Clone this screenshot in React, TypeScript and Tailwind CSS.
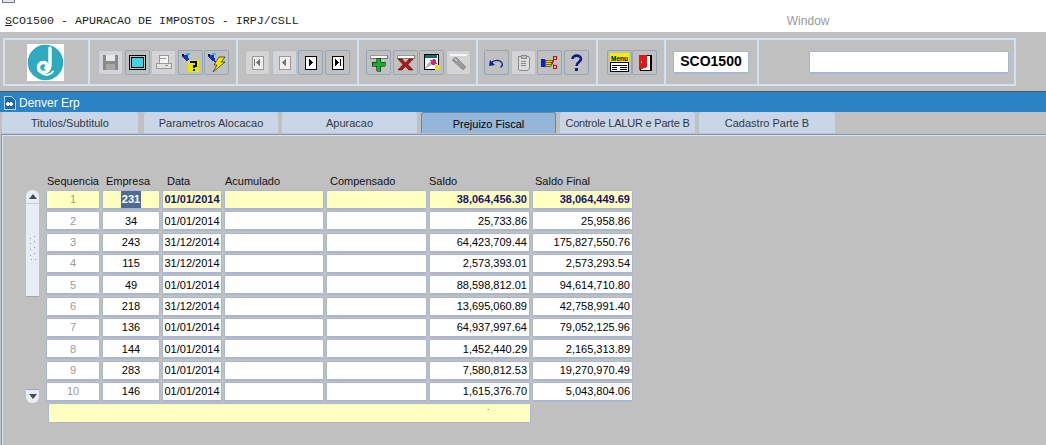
import type { ReactNode } from "react";

const rows = [
  { seq: "1", emp: "231", data: "01/01/2014", saldo: "38,064,456.30", final: "38,064,449.69" },
  { seq: "2", emp: "34", data: "01/01/2014", saldo: "25,733.86", final: "25,958.86" },
  { seq: "3", emp: "243", data: "31/12/2014", saldo: "64,423,709.44", final: "175,827,550.76" },
  { seq: "4", emp: "115", data: "31/12/2014", saldo: "2,573,393.01", final: "2,573,293.54" },
  { seq: "5", emp: "49", data: "01/01/2014", saldo: "88,598,812.01", final: "94,614,710.80" },
  { seq: "6", emp: "218", data: "31/12/2014", saldo: "13,695,060.89", final: "42,758,991.40" },
  { seq: "7", emp: "136", data: "01/01/2014", saldo: "64,937,997.64", final: "79,052,125.96" },
  { seq: "8", emp: "144", data: "01/01/2014", saldo: "1,452,440.29", final: "2,165,313.89" },
  { seq: "9", emp: "283", data: "01/01/2014", saldo: "7,580,812.53", final: "19,270,970.49" },
  { seq: "10", emp: "146", data: "01/01/2014", saldo: "1,615,376.70", final: "5,043,804.06" },
];

const tabs = [
  { label: "Titulos/Subtitulo", cls: "w-[136px] mr-[2px]" },
  { label: "Parametros Alocacao", cls: "w-[134px]" },
  { label: "Apuracao", cls: "w-[135px]" },
  { label: "Prejuizo Fiscal", cls: "w-[135px]" },
  { label: "Controle LALUR e Parte B", cls: "w-[135px] tracking-[-0.2px]" },
  { label: "Cadastro Parte B", cls: "w-[136px]" },
];

function Btn({ disabled, children }: { disabled?: boolean; children: ReactNode }) {
  return (
    <div className={`w-[25px] h-[25px] shrink-0 rounded-[2px] border flex items-center justify-center ${disabled ? "bg-[#d4d4d4] border-[#b4bcc6]" : "bg-[#c0c0c0] border-[#93a5b8]"}`}>
      <svg width="19" height="19" viewBox="0 0 19 19" shapeRendering="crispEdges">{children}</svg>
    </div>
  );
}

function Cell({ w, active, className, children }: { w: string; active?: boolean; className?: string; children?: ReactNode }) {
  return (
    <div className={`${w} h-[20px] shrink-0 rounded-[2px] border border-[#a9b8d0] border-b-2 flex items-center px-[2px] ${active ? "bg-[#ffffc0]" : "bg-white"} ${className ?? ""}`}>
      {children}
    </div>
  );
}

function Section({ w, className, children }: { w: string; className?: string; children?: ReactNode }) {
  return <div className={`${w} h-full shrink-0 border-r-2 border-[#d3e0f0] flex items-center ${className ?? ""}`}>{children}</div>;
}

// little blue wand shared by the two query buttons
function Wand() {
  return (
    <>
      <path d="M1 2 L8 1 L7 4 L9 9 L5 8 L1 4 Z" fill="#1030d0" />
      <rect x="5" y="0" width="4" height="2" fill="#20c0e0" />
      <rect x="1" y="1" width="2" height="2" fill="#000" />
    </>
  );
}

export default function App() {
  return (
    <div className="w-[1046px] h-[445px] overflow-hidden bg-[#c0c0c0] flex flex-col text-[11px] text-black font-['Liberation_Sans',Arial,sans-serif]">
      {/* window title and form title */}
      <div className="h-[32px] shrink-0 bg-white overflow-hidden">
        <div className="h-[3px] overflow-hidden flex items-end pl-[2px] gap-[4px]">
          <div className="w-[13px] h-[3px] shrink-0 border-b border-x border-[#6b7a8c] bg-[#dfe6ee]" />
          <span className="text-[12px] leading-[14px] whitespace-nowrap">DENVER ISERIES SINTESIS</span>
        </div>
        <div className="flex mt-[11px] pl-[5px] h-[14px] items-center">
          <span className="text-[11.67px] leading-[14px] text-[#222] whitespace-pre font-['Liberation_Mono','Courier_New',monospace]">
            <span className="underline">S</span>CO1500 - APURACAO DE IMPOSTOS - IRPJ/CSLL
          </span>
          <span className="ml-[488px] text-[12px] text-[#9a9a9a]">Window</span>
        </div>
      </div>

      {/* toolbar */}
      <div className="h-[59px] shrink-0 pt-[6px] pl-[3px]">
        <div className="w-[1013px] h-[48px] border-2 border-[#d3e0f0] flex">
          <Section w="w-[85px]" className="pl-[22px]">
            <div className="w-[37px] h-[37px] bg-white flex items-center justify-center">
              <svg width="37" height="37" viewBox="0 0 37 37">
                <circle cx="18.5" cy="18.5" r="17.8" fill="#2fa9bd" />
                <path d="M23 4 V21 C23 27 18 29.5 14.5 28 C10 26 10.5 19 16 18.5 C20 18 21 22 18.5 24" fill="none" stroke="#fff" strokeWidth="3.4" strokeLinecap="round" />
                <path d="M15 29.5 C19 32 24 30.5 26 27.5" fill="none" stroke="#fff" strokeWidth="1.8" strokeLinecap="round" />
              </svg>
            </div>
          </Section>
          <Section w="w-[148px]" className="gap-[1.6px] pl-[8px]">
            <Btn disabled>
              <rect x="2" y="2" width="15" height="15" fill="#8a8a8a" />
              <rect x="5" y="2" width="9" height="6" fill="#e8e8e8" />
              <rect x="5" y="11" width="9" height="6" fill="#a8a8a8" />
            </Btn>
            <Btn>
              <rect x="1" y="2" width="17" height="15" fill="#000" />
              <rect x="2" y="3" width="15" height="13" fill="#c0c0c0" />
              <rect x="3" y="4" width="13" height="11" fill="#000" />
              <rect x="4" y="5" width="11" height="9" fill="#3fd4e0" />
            </Btn>
            <Btn disabled>
              <rect x="5" y="2" width="9" height="8" fill="#f4f4f4" stroke="#999" />
              <rect x="2" y="10" width="15" height="5" fill="#e4e4e4" stroke="#999" />
              <rect x="11" y="12" width="3" height="1" fill="#888" />
              <rect x="6" y="5" width="6" height="1" fill="#999" />
            </Btn>
            <Btn>
              <Wand />
              <rect x="7" y="7" width="11" height="12" fill="#e8e800" />
              <path d="M10 10 V8.5 H15 V13 H12.5 V15" fill="none" stroke="#000" strokeWidth="2" />
              <rect x="11.5" y="16" width="2" height="2" fill="#000" />
            </Btn>
            <Btn>
              <Wand />
              <path d="M12 4 L18 4 L14 9 L18 9 L6 19 L10 12 L7 12 Z" fill="#f4e800" stroke="#222" strokeWidth="0.7" shapeRendering="auto" />
            </Btn>
          </Section>
          <Section w="w-[121px]" className="gap-[1.6px] pl-[7px]">
            <Btn disabled>
              <rect x="4" y="3" width="11" height="13" fill="#efefef" stroke="#999" />
              <rect x="6" y="6" width="1" height="7" fill="#777" />
              <path d="M12 6 V13 L8 9.5 Z" fill="#777" />
            </Btn>
            <Btn disabled>
              <rect x="4" y="3" width="11" height="13" fill="#efefef" stroke="#999" />
              <path d="M11 6 V13 L7 9.5 Z" fill="#777" />
            </Btn>
            <Btn>
              <rect x="4" y="3" width="11" height="13" fill="#fff" stroke="#000" />
              <path d="M8 6 V13 L12 9.5 Z" fill="#000" />
            </Btn>
            <Btn>
              <rect x="4" y="3" width="11" height="13" fill="#fff" stroke="#000" />
              <path d="M7 6 V13 L11 9.5 Z" fill="#000" />
              <rect x="12" y="6" width="1" height="7" fill="#000" />
            </Btn>
          </Section>
          <Section w="w-[119px]" className="gap-[1.6px] pl-[7px]">
            <Btn>
              <rect x="1" y="2" width="17" height="3" fill="#fff" stroke="#333" strokeWidth="0.5" />
              <path d="M7.5 5 H11.5 V9 H16 V13 H11.5 V18 H7.5 V13 H3 V9 H7.5 Z" fill="#10b030" stroke="#000" strokeWidth="0.5" />
            </Btn>
            <Btn>
              <rect x="1" y="2" width="17" height="3" fill="#fff" stroke="#333" strokeWidth="0.5" />
              <path d="M2 6 L6 6 L9.5 10 L13 6 L17 6 L12 11.5 L17 17 L13 17 L9.5 13.5 L6 17 L2 17 L7 11.5 Z" fill="#b01818" stroke="#400" strokeWidth="0.5" shapeRendering="auto" />
            </Btn>
            <Btn>
              <rect x="2" y="1" width="14" height="15" fill="#fff" stroke="#000" />
              <rect x="3" y="2" width="12" height="3" fill="#107070" />
              <path d="M3 15 L8 8 L10 12 L4 15 Z" fill="#b8b8b8" />
              <path d="M8 7 L13 6 L15 11 L10 12 Z" fill="#d02080" />
              <rect x="13" y="12" width="5" height="5" fill="#e8e000" />
            </Btn>
            <Btn disabled>
              <rect x="1" y="1" width="17" height="2" fill="#f4f4f4" />
              <path d="M3 7 L7 4 L17 14 L14 17 Z" fill="#9a9a9a" stroke="#777" strokeWidth="0.5" shapeRendering="auto" />
              <path d="M6 6 L8 8" stroke="#eee" />
            </Btn>
          </Section>
          <Section w="w-[120px]" className="gap-[1.6px] pl-[6px]">
            <Btn>
              <path d="M2 13 L3 7 L8 12 Z" fill="#0a2090" shapeRendering="auto" />
              <path d="M4 10 C7 6.5 13 6.5 15 10 C16 12 15 13.5 13.5 14.5" fill="none" stroke="#0a2090" strokeWidth="1.2" shapeRendering="auto" />
            </Btn>
            <Btn disabled>
              <rect x="4" y="3" width="11" height="14" rx="1" fill="#dcdcdc" stroke="#888" />
              <rect x="7" y="2" width="5" height="3" fill="#c0c0c0" stroke="#888" />
              <path d="M7 8 H12 M7 10 H12 M7 12 H12" stroke="#888" />
            </Btn>
            <Btn>
              <rect x="1" y="6" width="4" height="8" fill="#1020c0" />
              <path d="M5 7 H13 V9 H11 V13 H5 Z" fill="#f0d010" stroke="#000" strokeWidth="0.5" />
              <path d="M6 9 H11 M6 11 H11" stroke="#000" strokeWidth="0.5" />
              <circle cx="15" cy="5" r="2" fill="none" stroke="#c01010" />
              <circle cx="15" cy="14" r="2" fill="none" stroke="#c01010" />
              <path d="M14 7 L12 10 L14 12" fill="none" stroke="#c01010" />
            </Btn>
            <Btn>
              <path d="M5.5 6 C5.5 1.5 14 1.5 14 6 C14 9 9.5 9 9.5 13" fill="none" stroke="#0a1a90" strokeWidth="2.6" shapeRendering="auto" />
              <rect x="8" y="15" width="3" height="3" fill="#0a1a90" />
            </Btn>
          </Section>
          <Section w="w-[68px]" className="pl-[9px]">
            <Btn>
              <rect x="0" y="0" width="19" height="9" fill="#f0f000" />
              <text x="1" y="8" fontSize="6.5" fontWeight="700" fill="#000" textLength="17" lengthAdjust="spacingAndGlyphs">Menu</text>
              <rect x="0.5" y="9.5" width="18" height="9" fill="#fff" stroke="#000" />
              <path d="M2 12 H17 M2 14 H7 M10 14 H17 M2 16 H7 M10 16 H17" stroke="#000" />
            </Btn>
            <Btn>
              <rect x="5" y="2" width="11" height="15" fill="#fff" stroke="#000" />
              <rect x="15" y="2" width="2" height="15" fill="#000" />
              <path d="M4 2 L12 2 L12 14 L4 17 Z" fill="#e01818" />
              <rect x="6" y="8" width="1" height="2" fill="#f0e000" />
            </Btn>
          </Section>
          <Section w="w-[93px]" className="pl-[7px]">
            <div className="w-[76px] h-[23px] rounded-[2px] border border-[#a9b8d0] border-b-2 bg-white flex items-center justify-center text-[14px] font-bold">SCO1500</div>
          </Section>
          <div className="flex-1 flex items-center pl-[50px]">
            <div className="w-[200px] h-[23px] rounded-[2px] border border-[#a9b8d0] border-b-2 bg-white" />
          </div>
        </div>
      </div>

      {/* window caption */}
      <div className="h-[21px] shrink-0 bg-[#2b82c4] border-t border-[#44586c] flex items-center pl-[3px] gap-[3px] text-[12px] text-white">
        <svg width="13" height="15" viewBox="0 0 13 15" shapeRendering="crispEdges">
          <path d="M1 1 H8 L12 5 V14 H1 Z" fill="#1f6aa8" stroke="#b8d4ec" />
          <path d="M3 9 H10 M5 7 V11 M8 7 V11" stroke="#fff" strokeWidth="1.5" />
        </svg>
        <span className="pt-[1px]">Denver Erp</span>
      </div>

      {/* tabs */}
      <div className="h-[22px] shrink-0 flex gap-[4px] pl-[2px]">
        {tabs.map((t) => (
          <div key={t.label} className={`${t.cls} h-[21px] pt-[2px] rounded-t-[3px] flex items-center justify-center whitespace-nowrap ${t.label === "Prejuizo Fiscal" ? "bg-[#94b6d8] text-black border-t border-x border-[#6f86a0]" : "bg-[#c8d6e8] text-[#33363c]"}`}>
            {t.label}
          </div>
        ))}
      </div>

      {/* tab page */}
      <div className="flex-1 ml-[1px] border-t border-l border-[#7f95b0]">
        <div className="h-full border-t border-l border-[#d8e4f0] pt-[39px] pl-[23px]">
          <div className="flex gap-[7px]">
            <div className="w-[13px] shrink-0 pt-[15px] pb-[20px] flex flex-col justify-between">
              <div className="h-[107px] bg-[#e8edf5] rounded-t-[6px] border-b border-[#9aa8b8] flex flex-col items-center">
                <div className="h-[14px] w-full flex items-center justify-center border-b border-[#c4ccd8]">
                  <div className="w-0 h-0 border-x-[4px] border-x-transparent border-b-[5px] border-b-[#444c5c]" />
                </div>
                <svg className="mt-[31px]" width="9" height="26" viewBox="0 0 9 26" shapeRendering="crispEdges">
                  <path d="M6 1 h1 M2 3 h1 M2 8 h1 M6 6 h1 M6 12 h1 M2 14 h1 M2 20 h1 M6 18 h1 M7 24 h1 M3 24 h1" stroke="#8a96a8" />
                </svg>
              </div>
              <div className="h-[14px] bg-[#e8edf5] rounded-b-[6px] border-t border-[#9aa8b8] flex items-center justify-center">
                <div className="w-0 h-0 border-x-[4px] border-x-transparent border-t-[5px] border-t-[#444c5c]" />
              </div>
            </div>

            <div className="flex flex-col">
              <div className="flex h-[15px] pb-[2px] items-center leading-[13px] text-[#111]">
                <span className="w-[60px] pl-[1px]">Sequencia</span>
                <span className="w-[61px]">Empresa</span>
                <span className="w-[58px]">Data</span>
                <span className="w-[105px]">Acumulado</span>
                <span className="w-[99px]">Compensado</span>
                <span className="w-[106px]">Saldo</span>
                <span>Saldo Final</span>
              </div>
              <div className="flex flex-col gap-[1.33px]">
                {rows.map((r, i) => {
                  const active = i === 0;
                  const tone = active ? "font-bold text-[#14146e]" : "";
                  return (
                    <div key={r.seq} className="flex gap-[2px]">
                      <Cell w="w-[54px]" active={active} className="justify-center text-[#9a9a9a]">{r.seq}</Cell>
                      <Cell w="w-[58px]" active={active} className="justify-center">
                        {active ? <span className="bg-[#4f6a94] text-white font-bold px-[1px]">{r.emp}</span> : r.emp}
                      </Cell>
                      <Cell w="w-[60px]" active={active} className={`justify-center ${tone}`}>{r.data}</Cell>
                      <Cell w="w-[100px]" active={active} />
                      <Cell w="w-[101px]" active={active} />
                      <Cell w="w-[101px]" active={active} className={`justify-end ${tone}`}>{r.saldo}</Cell>
                      <Cell w="w-[101px]" active={active} className={`justify-end ${tone}`}>{r.final}</Cell>
                    </div>
                  );
                })}
              </div>
              <div className="mt-[1px] ml-[2px] w-[483px] h-[20px] rounded-[2px] border border-[#a9b8d0] bg-[#ffffc0] leading-[8px] pl-[438px] text-[8px]">.</div>
            </div>
          </div>
        </div>
      </div>
    </div>
  );
}
